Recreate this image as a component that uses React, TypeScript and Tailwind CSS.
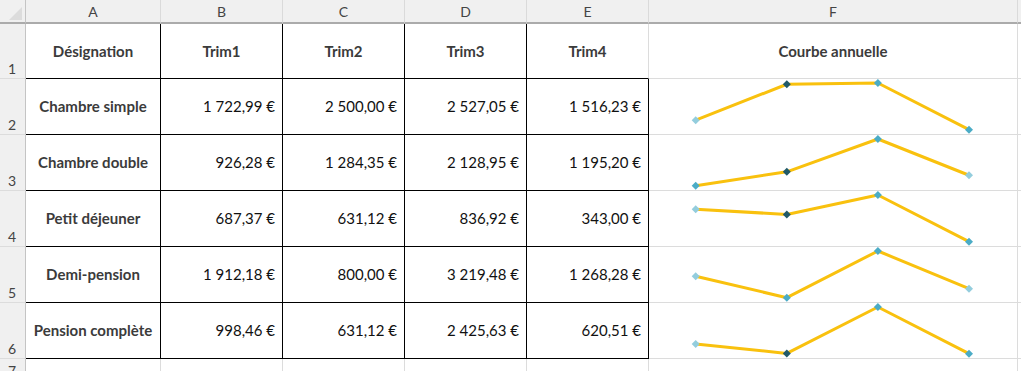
import React from "react";

const FONT = { fontFamily: "Lato, 'Open Sans', sans-serif" };

type Row = { label: string; values: number[] };

const rows: Row[] = [
  { label: "Chambre simple", values: [1722.99, 2500.0, 2527.05, 1516.23] },
  { label: "Chambre double", values: [926.28, 1284.35, 2128.95, 1195.2] },
  { label: "Petit déjeuner", values: [687.37, 631.12, 836.92, 343.0] },
  { label: "Demi-pension", values: [1912.18, 800.0, 3219.48, 1268.28] },
  { label: "Pension complète", values: [998.46, 631.12, 2425.63, 620.51] },
];

function fmt(v: number): string {
  const [int, dec] = v.toFixed(2).split(".");
  const withSpaces = int.replace(/\B(?=(\d{3})+(?!\d))/g, " ");
  return `${withSpaces},${dec} €`;
}

function Sparkline({ values }: { values: number[] }) {
  const max = Math.max(...values);
  const min = Math.min(...values);
  const pts = values.map((v, i) => {
    const n = (v - min) / (max - min);
    return { x: 46.7 + i * 91.1, y: 4 + (1 - n) * 46.7, v, i };
  });
  const color = (v: number, i: number) => {
    if (v === max || v === min) return "#4BACC6";
    if (i === 0 || i === values.length - 1) return "#93CDDD";
    return "#215968";
  };
  const r = 4;
  return (
    <svg width="368" height="55" className="block overflow-visible">
      <polyline
        points={pts.map((p) => `${p.x},${p.y}`).join(" ")}
        fill="none"
        stroke="#F9C10E"
        strokeWidth="3"
        strokeLinejoin="round"
      />
      {pts.map((p) => (
        <polygon
          key={p.i}
          points={`${p.x},${p.y - r} ${p.x + r},${p.y} ${p.x},${p.y + r} ${p.x - r},${p.y}`}
          fill={color(p.v, p.i)}
        />
      ))}
    </svg>
  );
}

function RowHead({ n }: { n: number }) {
  return (
    <div className="bg-[#f0f0f0] border-r border-r-[#c4c4c4] border-b border-b-[#dcdcdc] flex items-end pl-[8px] text-[14px] leading-[18px] text-[#444]">
      {n}
    </div>
  );
}

function ColHead({ l }: { l: string }) {
  return (
    <div className="bg-[#f0f0f0] border-r border-r-[#dadada] border-b-2 border-b-[#ababab] flex items-center justify-center text-[14px] text-[#444]">
      {l}
    </div>
  );
}

export default function App() {
  return (
    <div
      className="w-[1021px] h-[371px] overflow-hidden bg-white grid grid-cols-[26px_135px_122px_122px_122px_122px_369px_1fr] grid-rows-[24px_55px_56px_56px_56px_56px_56px_20px]"
      style={FONT}
    >
      {/* Column headers */}
      <div className="bg-[#f0f0f0] border-r border-r-[#c4c4c4] border-b-2 border-b-[#ababab] relative">
        <svg width="26" height="22" className="absolute left-0 top-0">
          <polygon points="22,7 22,20 9,20" fill="#dcdcdc" />
        </svg>
      </div>
      {["A", "B", "C", "D", "E", "F"].map((l) => (
        <ColHead key={l} l={l} />
      ))}
      <div className="bg-[#f0f0f0] border-b-2 border-b-[#ababab]" />

      {/* Row 1 */}
      <RowHead n={1} />
      {["Désignation", "Trim1", "Trim2", "Trim3"].map((t) => (
        <div
          key={t}
          className="border-r border-r-black border-b border-b-black flex items-center justify-center font-bold text-[15px] text-[#3b3b3b]"
        >
          {t}
        </div>
      ))}
      <div className="border-r border-r-[#dcdcdc] border-b border-b-black flex items-center justify-center font-bold text-[15px] text-[#3b3b3b]">
        Trim4
      </div>
      <div className="border-r border-r-[#dcdcdc] border-b border-b-[#dcdcdc] flex items-center justify-center font-bold text-[15px] text-[#3b3b3b]">
        Courbe annuelle
      </div>
      <div className="border-b border-b-[#dcdcdc]" />

      {/* Data rows */}
      {rows.map((r, ri) => (
        <React.Fragment key={r.label}>
          <RowHead n={ri + 2} />
          <div className="border-r border-r-black border-b border-b-black flex items-center justify-center font-bold text-[15px] text-[#3b3b3b] whitespace-nowrap">
            {r.label}
          </div>
          {r.values.map((v, i) => (
            <div
              key={i}
              className="border-r border-r-black border-b border-b-black flex items-center justify-end pr-[7px] text-[15px] text-[#111] whitespace-nowrap"
            >
              {fmt(v)}
            </div>
          ))}
          <div className="border-r border-r-[#dcdcdc] border-b border-b-[#dcdcdc]">
            <Sparkline values={r.values} />
          </div>
          <div className="border-b border-b-[#dcdcdc]" />
        </React.Fragment>
      ))}

      {/* Row 7 */}
      <div className="bg-[#f0f0f0] border-r border-r-[#c4c4c4] flex items-start pl-[8px] pt-[3px] text-[14px] leading-[18px] text-[#444]">
        7
      </div>
      {[0, 1, 2, 3, 4, 5].map((i) => (
        <div key={i} className="border-r border-r-[#dcdcdc]" />
      ))}
      <div />
    </div>
  );
}
